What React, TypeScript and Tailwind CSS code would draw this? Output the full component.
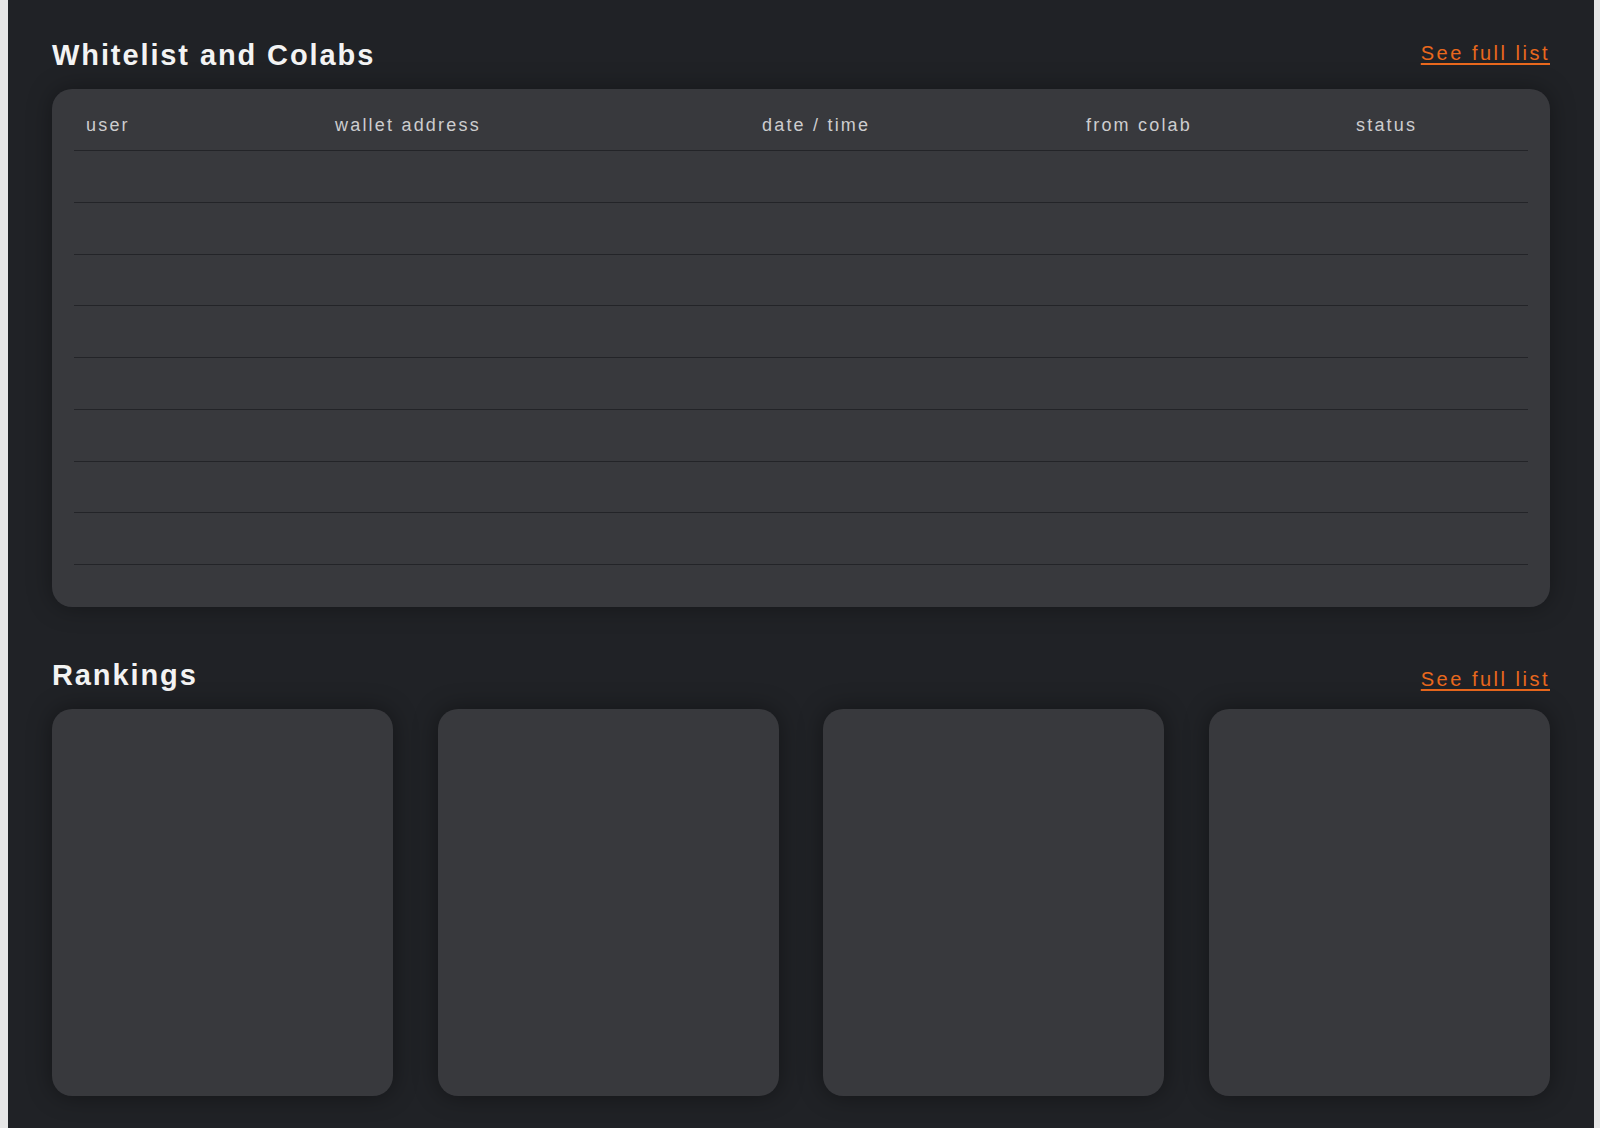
import React from "react";

const cols = ["user", "wallet address", "date / time", "from colab", "status"];

export default function App() {
  const rows = Array.from({ length: 8 });
  return (
    <div
      className="flex w-full min-h-[1128px] bg-[#e6e6e6]"
      style={{ fontFamily: '"Liberation Sans", Arial, sans-serif' }}
    >
      <div className="w-[8px] shrink-0" />
      <main className="flex-1 bg-[#202226] px-[44px] pt-[37px] pb-[32px]">
        {/* Whitelist header */}
        <div className="flex items-start justify-between mb-[16px]">
          <h1 className="text-[29px] leading-[36px] font-bold tracking-[1.9px] text-[#f3f3f3]">
            Whitelist and Colabs
          </h1>
          <a className="mt-[4px] text-[20px] leading-[24px] tracking-[2.5px] text-[#e9681d] underline decoration-[2px] underline-offset-[3px]">
            See full list
          </a>
        </div>

        {/* Table card */}
        <div className="rounded-[20px] bg-[#38393d] px-[22px] pb-[42px] shadow-[0_0_24px_rgba(0,0,0,0.35)]">
          <div className="grid grid-cols-[249px_427px_324px_270px_1fr] pl-[12px] pt-[24px] h-[62px] border-b border-[#232428] text-[18px] leading-[24px] tracking-[2.2px] text-[#cdcdcf]">
            {cols.map((c) => (
              <div key={c}>{c}</div>
            ))}
          </div>
          {rows.map((_, i) => (
            <div key={i} className="h-[51.75px] border-b border-[#232428]" />
          ))}
        </div>

        {/* Rankings header */}
        <div className="flex items-start justify-between mt-[50px] mb-[16px]">
          <h2 className="text-[29px] leading-[36px] font-bold tracking-[1.9px] text-[#f3f3f3]">
            Rankings
          </h2>
          <a className="mt-[10px] text-[20px] leading-[24px] tracking-[2.5px] text-[#e9681d] underline decoration-[2px] underline-offset-[3px]">
            See full list
          </a>
        </div>

        {/* Ranking cards */}
        <div className="grid grid-cols-4 gap-[44.67px]">
          {[0, 1, 2, 3].map((i) => (
            <div
              key={i}
              className="h-[387px] rounded-[20px] bg-[#38393d] shadow-[0_0_24px_rgba(0,0,0,0.4)]"
            />
          ))}
        </div>
      </main>
      <div className="w-[6px] shrink-0" />
    </div>
  );
}
